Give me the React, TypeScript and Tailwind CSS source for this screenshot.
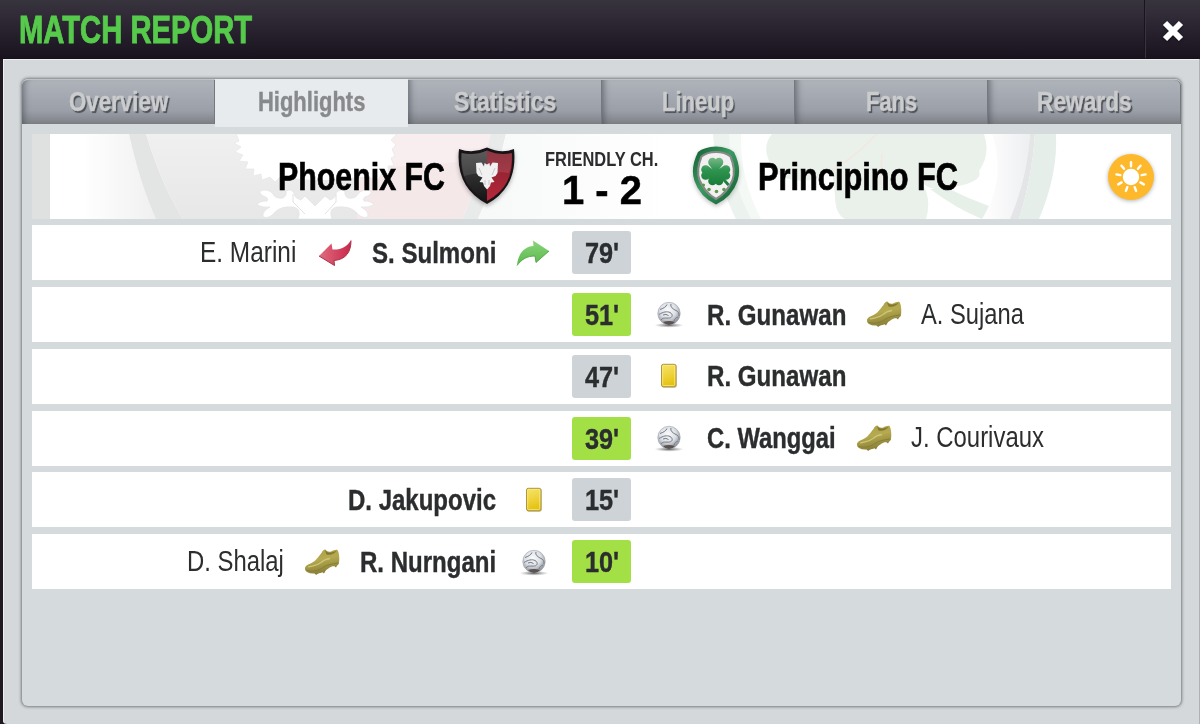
import { useLayoutEffect, useRef, useState } from 'react'
import clsx from 'clsx'

type IconName = 'in' | 'out' | 'ball' | 'card' | 'boot'

interface Player {
  name: string
  width: number
  icon: IconName
}

interface MatchEvent {
  minute: string
  side: 'home' | 'away'
  goal?: boolean
  main: Player
  extra?: Player
}

const tabs = [
  { label: 'Overview', width: 99 },
  { label: 'Highlights', width: 107 },
  { label: 'Statistics', width: 102 },
  { label: 'Lineup', width: 72 },
  { label: 'Fans', width: 51 },
  { label: 'Rewards', width: 95 },
]

const events: MatchEvent[] = [
  {
    minute: "79'",
    side: 'home',
    main: { name: 'S. Sulmoni', width: 124, icon: 'in' },
    extra: { name: 'E. Marini', width: 96, icon: 'out' },
  },
  {
    minute: "51'",
    side: 'away',
    goal: true,
    main: { name: 'R. Gunawan', width: 139, icon: 'ball' },
    extra: { name: 'A. Sujana', width: 103, icon: 'boot' },
  },
  { minute: "47'", side: 'away', main: { name: 'R. Gunawan', width: 139, icon: 'card' } },
  {
    minute: "39'",
    side: 'away',
    goal: true,
    main: { name: 'C. Wanggai', width: 129, icon: 'ball' },
    extra: { name: 'J. Courivaux', width: 133, icon: 'boot' },
  },
  { minute: "15'", side: 'home', main: { name: 'D. Jakupovic', width: 148, icon: 'card' } },
  {
    minute: "10'",
    side: 'home',
    goal: true,
    main: { name: 'R. Nurngani', width: 136, icon: 'ball' },
    extra: { name: 'D. Shalaj', width: 97, icon: 'boot' },
  },
]

// Condensed lettering: squeezes a line of text to the given width
function Condensed({ text, width, className }: { text: string; width: number; className?: string }) {
  const ref = useRef<HTMLSpanElement>(null)
  const [scale, setScale] = useState(0.8)

  useLayoutEffect(() => {
    if (ref.current) setScale(width / ref.current.offsetWidth)
  }, [text, width])

  return (
    <span className={clsx('block shrink-0 whitespace-nowrap', className)} style={{ width }}>
      <span ref={ref} className="inline-block origin-left" style={{ transform: `scaleX(${scale})` }}>
        {text}
      </span>
    </span>
  )
}

function Icon({ name }: { name: IconName }) {
  switch (name) {
    case 'in':
      return (
        <svg width="34" height="28" viewBox="0 0 34 28" className="-translate-x-px">
          <defs>
            <linearGradient id="in" x1="0" y1="0" x2="0" y2="1">
              <stop offset="0" stopColor="#8bd57c" />
              <stop offset="1" stopColor="#58b84a" />
            </linearGradient>
          </defs>
          <path d="M1 26.500C2 15 8 7.500 17.500 7L17 1.500L33 12L20 23.500L19 17C11 17 6 20 1 26.500Z" fill="url(#in)" />
          <path d="M1 26.500C6 20 11 17 19 17L20 23.500L33 12" fill="none" stroke="#4ea243" strokeWidth="0.900" />
        </svg>
      )
    case 'out':
      return (
        <svg width="34" height="28" viewBox="0 0 34 28" className="translate-x-px">
          <defs>
            <linearGradient id="out" x1="0" y1="0" x2="1" y2="0">
              <stop offset="0" stopColor="#e06c7e" />
              <stop offset="1" stopColor="#c9284b" />
            </linearGradient>
          </defs>
          <path d="M33 1.500C33 13 28 20.500 16 21.500L16.500 26.500L1 17L13.500 4.500L14.500 10.500C23 11 28.500 8 33 1.500Z" fill="url(#out)" />
          <path d="M33 1.500C33 13 28 20.500 16 21.500L16.500 26.500L1 17" fill="none" stroke="#a8304a" strokeWidth="1" />
        </svg>
      )
    case 'ball':
      return (
        <svg width="30" height="28" viewBox="0 0 30 28">
          <defs>
            <radialGradient id="ball" cx="0.45" cy="0.35" r="0.650">
              <stop offset="0" stopColor="#fafbfc" />
              <stop offset="0.550" stopColor="#dcdfe4" />
              <stop offset="1" stopColor="#868b93" />
            </radialGradient>
            <radialGradient id="shade">
              <stop offset="0" stopColor="#333" stopOpacity="0.800" />
              <stop offset="1" stopColor="#777" stopOpacity="0" />
            </radialGradient>
          </defs>
          <ellipse cx="15" cy="25.200" rx="14.500" ry="2.500" fill="url(#shade)" />
          <circle cx="15" cy="13.500" r="11.200" fill="url(#ball)" stroke="#a9adb3" strokeWidth="0.700" />
          <path d="M9 22Q15 20 21 22Q18.500 25 15 25Q11.500 25 9 22Z" fill="#5b5252" />
          <path
            d="M13 4.500C12 7 9 8.500 6 9.500M17 4C16 7 19 9 22 10.500S25 14 25 16M5 14.500C9 12 13 11 16 12.500S19 17.500 15.500 18S9 17 7 20M9 15Q12 13.500 14.500 15.500M24 17C22 17.500 20.500 19 20 21"
            fill="none"
            stroke="#737984"
            strokeWidth="1"
          />
        </svg>
      )
    case 'card':
      return (
        <svg width="18" height="26" viewBox="0 0 18 26">
          <defs>
            <linearGradient id="card" x1="0" y1="0" x2="0.200" y2="1">
              <stop offset="0" stopColor="#f5e56a" />
              <stop offset="0.550" stopColor="#efd23b" />
              <stop offset="1" stopColor="#e3c20f" />
            </linearGradient>
          </defs>
          <rect x="1.800" y="1.800" width="15" height="23" rx="2" fill="#c4c2ba" />
          <rect x="1.500" y="1.300" width="14.500" height="22.500" rx="1.800" fill="url(#card)" stroke="#b0953e" strokeWidth="1" />
          <rect x="2.700" y="2.500" width="12" height="20" rx="1" fill="none" stroke="#fbe98a" strokeWidth="0.700" />
        </svg>
      )
    case 'boot':
      return (
        <svg width="36" height="28" viewBox="0 0 36 28">
          <defs>
            <linearGradient id="boot" x1="0" y1="0" x2="0.300" y2="1">
              <stop offset="0" stopColor="#a89d4a" />
              <stop offset="0.500" stopColor="#b5aa50" />
              <stop offset="1" stopColor="#8d8237" />
            </linearGradient>
          </defs>
          <path d="M4 23L6 25.500L8 24ZM10 24.500L12 27L15 25ZM17 23L20 25.500L22 22ZM29 17L32 19.500L34.500 15Z" fill="#8b8040" />
          <path
            d="M1 20.500C1 18 4 16.500 7 15.300C12 13 14.500 8.500 17.500 5C18.500 3 19.500 1.500 21.500 1.500C23 3.500 25 4.200 27 3.500C29.500 2.500 31.500 1.300 33.500 2C35.300 5 35.800 11 34.800 16C33 18.500 30.500 18 28.500 18.300C24.500 19.500 22 23 18 24.500C13 26.500 6 25.500 3 24C1.500 23 1 22 1 20.500Z"
            fill="url(#boot)"
          />
          <path d="M21.500 2.200C23 5 27 5.500 32.500 2.800C31 5.500 27 7.500 22.500 6.500Q21 4.500 21.500 2.200Z" fill="#81772f" />
          <path d="M4 19C8 17.500 12 18.500 17 14.500C19.500 12 22 11 26 10.500" fill="none" stroke="#cdc475" strokeWidth="1.300" />
          <path d="M2.500 22.300C9 24.300 15 22.500 19 19.500C23 16.500 28 16 34 15" fill="none" stroke="#857a37" strokeWidth="0.900" />
        </svg>
      )
  }
}

function Slot({ name }: { name: IconName }) {
  return (
    <span className="flex w-[38px] shrink-0 items-center justify-center">
      <Icon name={name} />
    </span>
  )
}

function PhoenixCrest() {
  return (
    <svg width="58" height="62" viewBox="0 0 58 62" className="-ml-px drop-shadow-[0_2px_2px_rgba(0,0,0,0.3)]">
      <defs>
        <linearGradient id="red" x1="0" y1="0" x2="0" y2="1">
          <stop offset="0" stopColor="#81202c" />
          <stop offset="1" stopColor="#b7283a" />
        </linearGradient>
        <linearGradient id="black" x1="0" y1="0" x2="0" y2="1">
          <stop offset="0" stopColor="#484848" />
          <stop offset="1" stopColor="#151515" />
        </linearGradient>
      </defs>
      <path d="M1 3Q15 8 29 1.500Q43 8 56 3Q60 41 29 58Q-3 41 1 3Z" fill="#171316" />
      <path d="M3.500 7Q17 10 29 4.500V55Q0 40 3.500 7Z" fill="url(#black)" />
      <path d="M29 4.500Q42 10 53.800 7Q57 40 29 55Z" fill="url(#red)" />
      <path d="M3.500 7Q17 10 29 4.500Q42 10 53.800 7Q54 20 51 27Q29 24 6 30Q3 19 3.500 7Z" fill="#fff" opacity="0.1" />
      <path
        d="M18 17L23.500 16.500L26 20.500L26.500 17L29 18.500L31.500 17L32 20.500L34.500 16.500L40 17L39.500 27L37.500 30L33.500 31.500L36.500 36L33 36.500L32 40L29 43.500L26 40L25 36.500L21.500 36L24.500 31.500L20.500 30L18.500 27Z"
        fill="#f1f1f2"
      />
      <path d="M21 22L24 29M37 22L34 29M27 34V39M31 34V39" stroke="#b8b2b5" strokeWidth="0.700" />
    </svg>
  )
}

function CloverCrest() {
  return (
    <svg width="50" height="62" viewBox="0 0 50 62" className="drop-shadow-[0_2px_2px_rgba(0,0,0,0.25)]">
      <defs>
        <linearGradient id="rim" x1="0" y1="0" x2="1" y2="1">
          <stop offset="0" stopColor="#115d32" />
          <stop offset="0.450" stopColor="#3d9a62" />
          <stop offset="1" stopColor="#0c5c2c" />
        </linearGradient>
        <linearGradient id="leaf" gradientUnits="userSpaceOnUse" x1="0" y1="11" x2="0" y2="40">
          <stop offset="0" stopColor="#7dbb8c" />
          <stop offset="0.450" stopColor="#2f9450" />
          <stop offset="1" stopColor="#187a38" />
        </linearGradient>
      </defs>
      <path d="M25 0.500Q37 1 43 6Q51 22 46.500 35Q41 51 25 58.500Q9 51 3.500 35Q-1 22 7 6Q13 1 25 0.500Z" fill="url(#rim)" />
      <path d="M25 6Q34 6 39.500 10.500Q45 24 41.500 34Q36 47 25 53Q14 47 8.500 34Q5 24 10.500 10.500Q16 6 25 6Z" fill="#f2f0f1" stroke="#868b88" strokeWidth="2" />
      <g fill="url(#leaf)">
        <circle cx="21.500" cy="16" r="4.300" />
        <circle cx="28" cy="16" r="4.300" />
        <path d="M17.500 18L24.800 28L32 18L25 14Z" />
        <circle cx="14.500" cy="23.500" r="4.300" />
        <circle cx="14.500" cy="29.500" r="4.300" />
        <path d="M16 19.500L27 26.500L16 33.500L12 26Z" />
        <circle cx="35" cy="23.500" r="4.300" />
        <circle cx="35" cy="29.500" r="4.300" />
        <path d="M33.500 19.500L22.500 26.500L33.500 33.500L37 26Z" />
        <circle cx="21.500" cy="35" r="4.300" />
        <circle cx="28" cy="35" r="4.300" />
        <path d="M17.500 33L24.800 23L32 33L25 37Z" />
        <path d="M26 27Q33 31 38.500 38L36.500 40Q31 33 25 29Z" />
      </g>
      <g fill="#5c9a49">
        <circle cx="12.500" cy="39" r="1.600" />
        <circle cx="18" cy="43.500" r="1.800" />
        <circle cx="25.500" cy="45.500" r="1.800" />
        <circle cx="33" cy="43.500" r="1.800" />
      </g>
    </svg>
  )
}

// Faded, oversized crests behind the score line
function Watermark() {
  return (
    <svg className="absolute inset-0 h-full w-full" viewBox="0 0 1139 85" preserveAspectRatio="none">
      <defs>
        <linearGradient id="fadeL">
          <stop offset="0" stopColor="#fff" />
          <stop offset="1" stopColor="#f0f0f0" />
        </linearGradient>
        <linearGradient id="grey" x1="0" y1="0" x2="0" y2="1">
          <stop offset="0" stopColor="#f0f0f0" />
          <stop offset="1" stopColor="#e7e7e7" />
        </linearGradient>
        <linearGradient id="fadeR">
          <stop offset="0" stopColor="#f7f8f8" />
          <stop offset="1" stopColor="#fff" />
        </linearGradient>
        <linearGradient id="inner">
          <stop offset="0" stopColor="#fff" />
          <stop offset="1" stopColor="#eeeff1" />
        </linearGradient>
      </defs>
      <path d="M0 0H18V85H0Z" fill="#dfe0e0" />
      <path d="M50 0H97Q108 50 124 85H50Z" fill="url(#fadeL)" />
      <path d="M97 0H114Q130 52 151 85H124Q108 50 97 0Z" fill="#e3e4e4" />
      <path d="M114 0H325V85H151Q130 52 114 0Z" fill="url(#grey)" />
      <path d="M325 0H459Q449 45 430 85H325Z" fill="#f5e8e9" />
      <path d="M325 0H459L453 24Q390 34 325 33Z" fill="#f8eeef" />
      <path d="M459 0H474Q464 45 446 85H430Q449 45 459 0Z" fill="#e9eaea" />
      <path d="M474 0H640V85H446Q464 45 474 0Z" fill="url(#fadeR)" />
      <path
        d="M204 0L207 7L202 9L209 13L203 18L211 21L207 27L216 28L213 35L222 35L221 42L229 40L230 46L238 43L243 48L249 42L264 45L287 47L310 45L335 43L346 46L350 39L357 40L356 32L362 32L359 24L363 22L360 15L364 11L359 6L365 0Z"
        fill="#fff"
        stroke="#e8e8e8"
        strokeWidth="0.800"
      />
      <path
        d="M228 57Q236 54 241 60Q243 65 251 64Q255 62 254 57Q259 54 262 59Q262 64 269 66L273 62L283 72L293 62L298 66Q304 64 304 59Q308 54 313 57Q312 62 316 64Q324 65 326 60Q331 54 339 57Q340 61 333 63Q330 65 332 67Q340 67 342 71Q335 74 329 73Q337 77 336 83Q329 85 324 78Q318 72 305 73Q296 74 300 85H266Q270 74 261 73Q249 72 243 78Q238 85 231 83Q230 77 238 73Q232 74 225 71Q227 67 235 67Q237 65 234 63Q227 61 228 57Z"
        fill="#fff"
        stroke="#e4e4e4"
        strokeWidth="0.800"
      />
      <path d="M261 60V68L273 80M304 60V68L293 80" fill="none" stroke="#e2e2e2" strokeWidth="1" />
      <path d="M681 0H709Q708 45 729 85H704Q684 45 681 0Z" fill="#f5f9f6" />
      <path d="M681 0H697Q698 45 719 85H704Q684 45 681 0Z" fill="#ecf3ef" />
      <path d="M740 0Q727 15 743 37Q757 51 784 45L800 36L803 62Q803 80 813 85H894Q900 65 890 49Q903 60 926 52Q951 47 947 37Q959 20 952 0Z" fill="#e9f1ea" />
      <path d="M898 55Q925 75 950 85H955L957 72Q935 64 915 54Z" fill="#e7f0e8" />
      <path d="M800 36Q821 25 845 0M848 51L850 20" fill="none" stroke="#f1e8df" strokeWidth="1.500" />
      <path d="M960 0H998Q995 45 978 85H950Q975 45 960 0Z" fill="url(#inner)" />
      <path d="M998 0H1003Q1000 45 987 85H978Q995 45 998 0Z" fill="#e4e5e6" />
      <path d="M1003 0H1024Q1026 40 1007 85H987Q1000 45 1003 0Z" fill="#e5eee9" />
    </svg>
  )
}

function Sun() {
  return (
    <svg width="52" height="52" viewBox="0 0 52 52" className="drop-shadow-[0_1px_2px_rgba(0,0,0,0.3)]">
      <circle cx="26" cy="26" r="23" fill="#fdb92b" />
      <circle cx="26" cy="26" r="8.200" fill="#fff" />
      <g stroke="#fff" strokeWidth="2.400" strokeLinecap="round">
        {[0, 40, 80, 120, 160, 200, 240, 280, 320].map((a) => (
          <line key={a} x1="26" y1="15.200" x2="26" y2="11.200" transform={`rotate(${a} 26 26)`} />
        ))}
      </g>
    </svg>
  )
}

function EventSide({ event }: { event: MatchEvent }) {
  const { main, extra } = event
  return (
    <div
      className={clsx(
        'flex h-full items-center gap-[19px] text-[29.5px] leading-none text-[#2b2d2f]',
        event.side === 'home' && 'flex-row-reverse',
      )}
    >
      <Slot name={main.icon} />
      <Condensed text={main.name} width={main.width} className="font-bold [-webkit-text-stroke:0.4px]" />
      {extra && (
        <>
          <Slot name={extra.icon} />
          <Condensed
            text={extra.name}
            width={extra.width}
            className={clsx('relative -top-px', event.side === 'away' && '-ml-px')}
          />
        </>
      )}
    </div>
  )
}

function EventRow({ event }: { event: MatchEvent }) {
  return (
    <div className="grid h-[55px] grid-cols-[521px_59px_1fr] items-center gap-x-[19px] bg-white">
      <div className="h-full">{event.side === 'home' && <EventSide event={event} />}</div>
      <div
        className={clsx(
          'flex h-[43px] items-center justify-center rounded-[3px] pt-0.5 text-[29px] leading-none font-bold text-[#2b2d2f] [-webkit-text-stroke:0.4px]',
          event.goal ? 'bg-[#a3e046]' : 'bg-[#cdd3d6]',
        )}
      >
        <Condensed text={event.minute} width={34} />
      </div>
      <div className="h-full">{event.side === 'away' && <EventSide event={event} />}</div>
    </div>
  )
}

export default function App() {
  const [active, setActive] = useState('Highlights')

  return (
    <div className="flex h-[724px] w-[1200px] flex-col overflow-hidden bg-[#1f1922] font-['Liberation_Sans',Arial,sans-serif]">
      <header className="flex h-[59px] shrink-0 items-center justify-between border-b border-[#17111c] bg-linear-to-b from-[#38343e] via-[#292330] to-[#19131e]">
        <h1 className="pl-[19px]">
          <Condensed
            text="MATCH REPORT"
            width={233}
            className="pt-[2px] text-[38.5px] leading-[60px] font-bold text-[#56cb4b] [-webkit-text-stroke:0.9px]"
          />
        </h1>
        <button className="flex h-full w-[56px] items-center justify-center border-l border-[#19131e] shadow-[inset_1px_0_0_#39333f]">
          <svg width="22" height="22" viewBox="0 0 22 22" className="mt-[3px] drop-shadow-[0_1px_1px_rgba(0,0,0,0.5)]">
            <path d="M3 3L19 19M19 3L3 19" stroke="#fff" strokeWidth="6" />
          </svg>
        </button>
      </header>

      <main className="ml-[3px] flex-1 rounded-bl-sm border-r border-[#aeb2b5] bg-[#d4d8da] pt-5 pr-[18px] pb-[18px] pl-[19px] shadow-[inset_1px_1px_0_#eceff0]">
        <div className="flex h-[627px] flex-col rounded-md bg-[#d5dadd] shadow-[0_0_3px_1px_#777c80]">
          <nav className="flex h-[45px] shrink-0 overflow-visible">
            {tabs.map((tab) => {
              const selected = tab.label === active
              return (
                <button
                  key={tab.label}
                  onClick={() => setActive(tab.label)}
                  className={clsx(
                    'flex flex-1 items-center justify-center text-[27.5px] leading-none font-bold [-webkit-text-stroke:0.4px] first:rounded-tl-md last:rounded-tr-md',
                    selected
                      ? 'h-12 bg-[#e7ebed] pb-[3px] text-[#87898b]'
                      : 'border-t border-[#c0c4c9] bg-linear-to-b from-[#afb4bb] via-[#9b9fa8] via-70% to-[#7d8086] text-[#cbcccd] shadow-[inset_7px_0_6px_-5px_rgba(65,69,76,0.6),inset_-1px_0_0_#747980] text-shadow-[2px_2px_1px_#4d5157]',
                  )}
                >
                  <Condensed text={tab.label} width={tab.width} />
                </button>
              )
            })}
          </nav>

          <div className="flex flex-col gap-[6.85px] px-[10px] pt-[10px]">
            <section className="relative -mb-[0.85px] h-[85px] overflow-hidden bg-white">
              <Watermark />
              <div className="relative flex h-full items-center">
                <div className="flex w-[484px] shrink-0 items-center justify-end gap-[14px]">
                  <Condensed
                    text="Phoenix FC"
                    width={167}
                    className="pt-px text-[38px] leading-none font-bold text-black [-webkit-text-stroke:0.7px]"
                  />
                  <PhoenixCrest />
                </div>
                <div className="flex w-[171px] shrink-0 flex-col items-center pt-[5px] font-bold">
                  <Condensed text="FRIENDLY CH." width={113} className="text-[20.5px] leading-[20px] text-[#2c2c2e]" />
                  <Condensed
                    text="1 - 2"
                    width={80}
                    className="mt-px text-[41.5px] leading-[40px] text-black [-webkit-text-stroke:0.5px]"
                  />
                </div>
                <div className="flex flex-1 items-center gap-[17px] pl-1">
                  <CloverCrest />
                  <Condensed
                    text="Principino FC"
                    width={200}
                    className="pt-px text-[38px] leading-none font-bold text-black [-webkit-text-stroke:0.7px]"
                  />
                </div>
                <div className="mr-[14px]">
                  <Sun />
                </div>
              </div>
            </section>

            {events.map((event) => (
              <EventRow key={event.minute} event={event} />
            ))}
          </div>
        </div>
      </main>
    </div>
  )
}
